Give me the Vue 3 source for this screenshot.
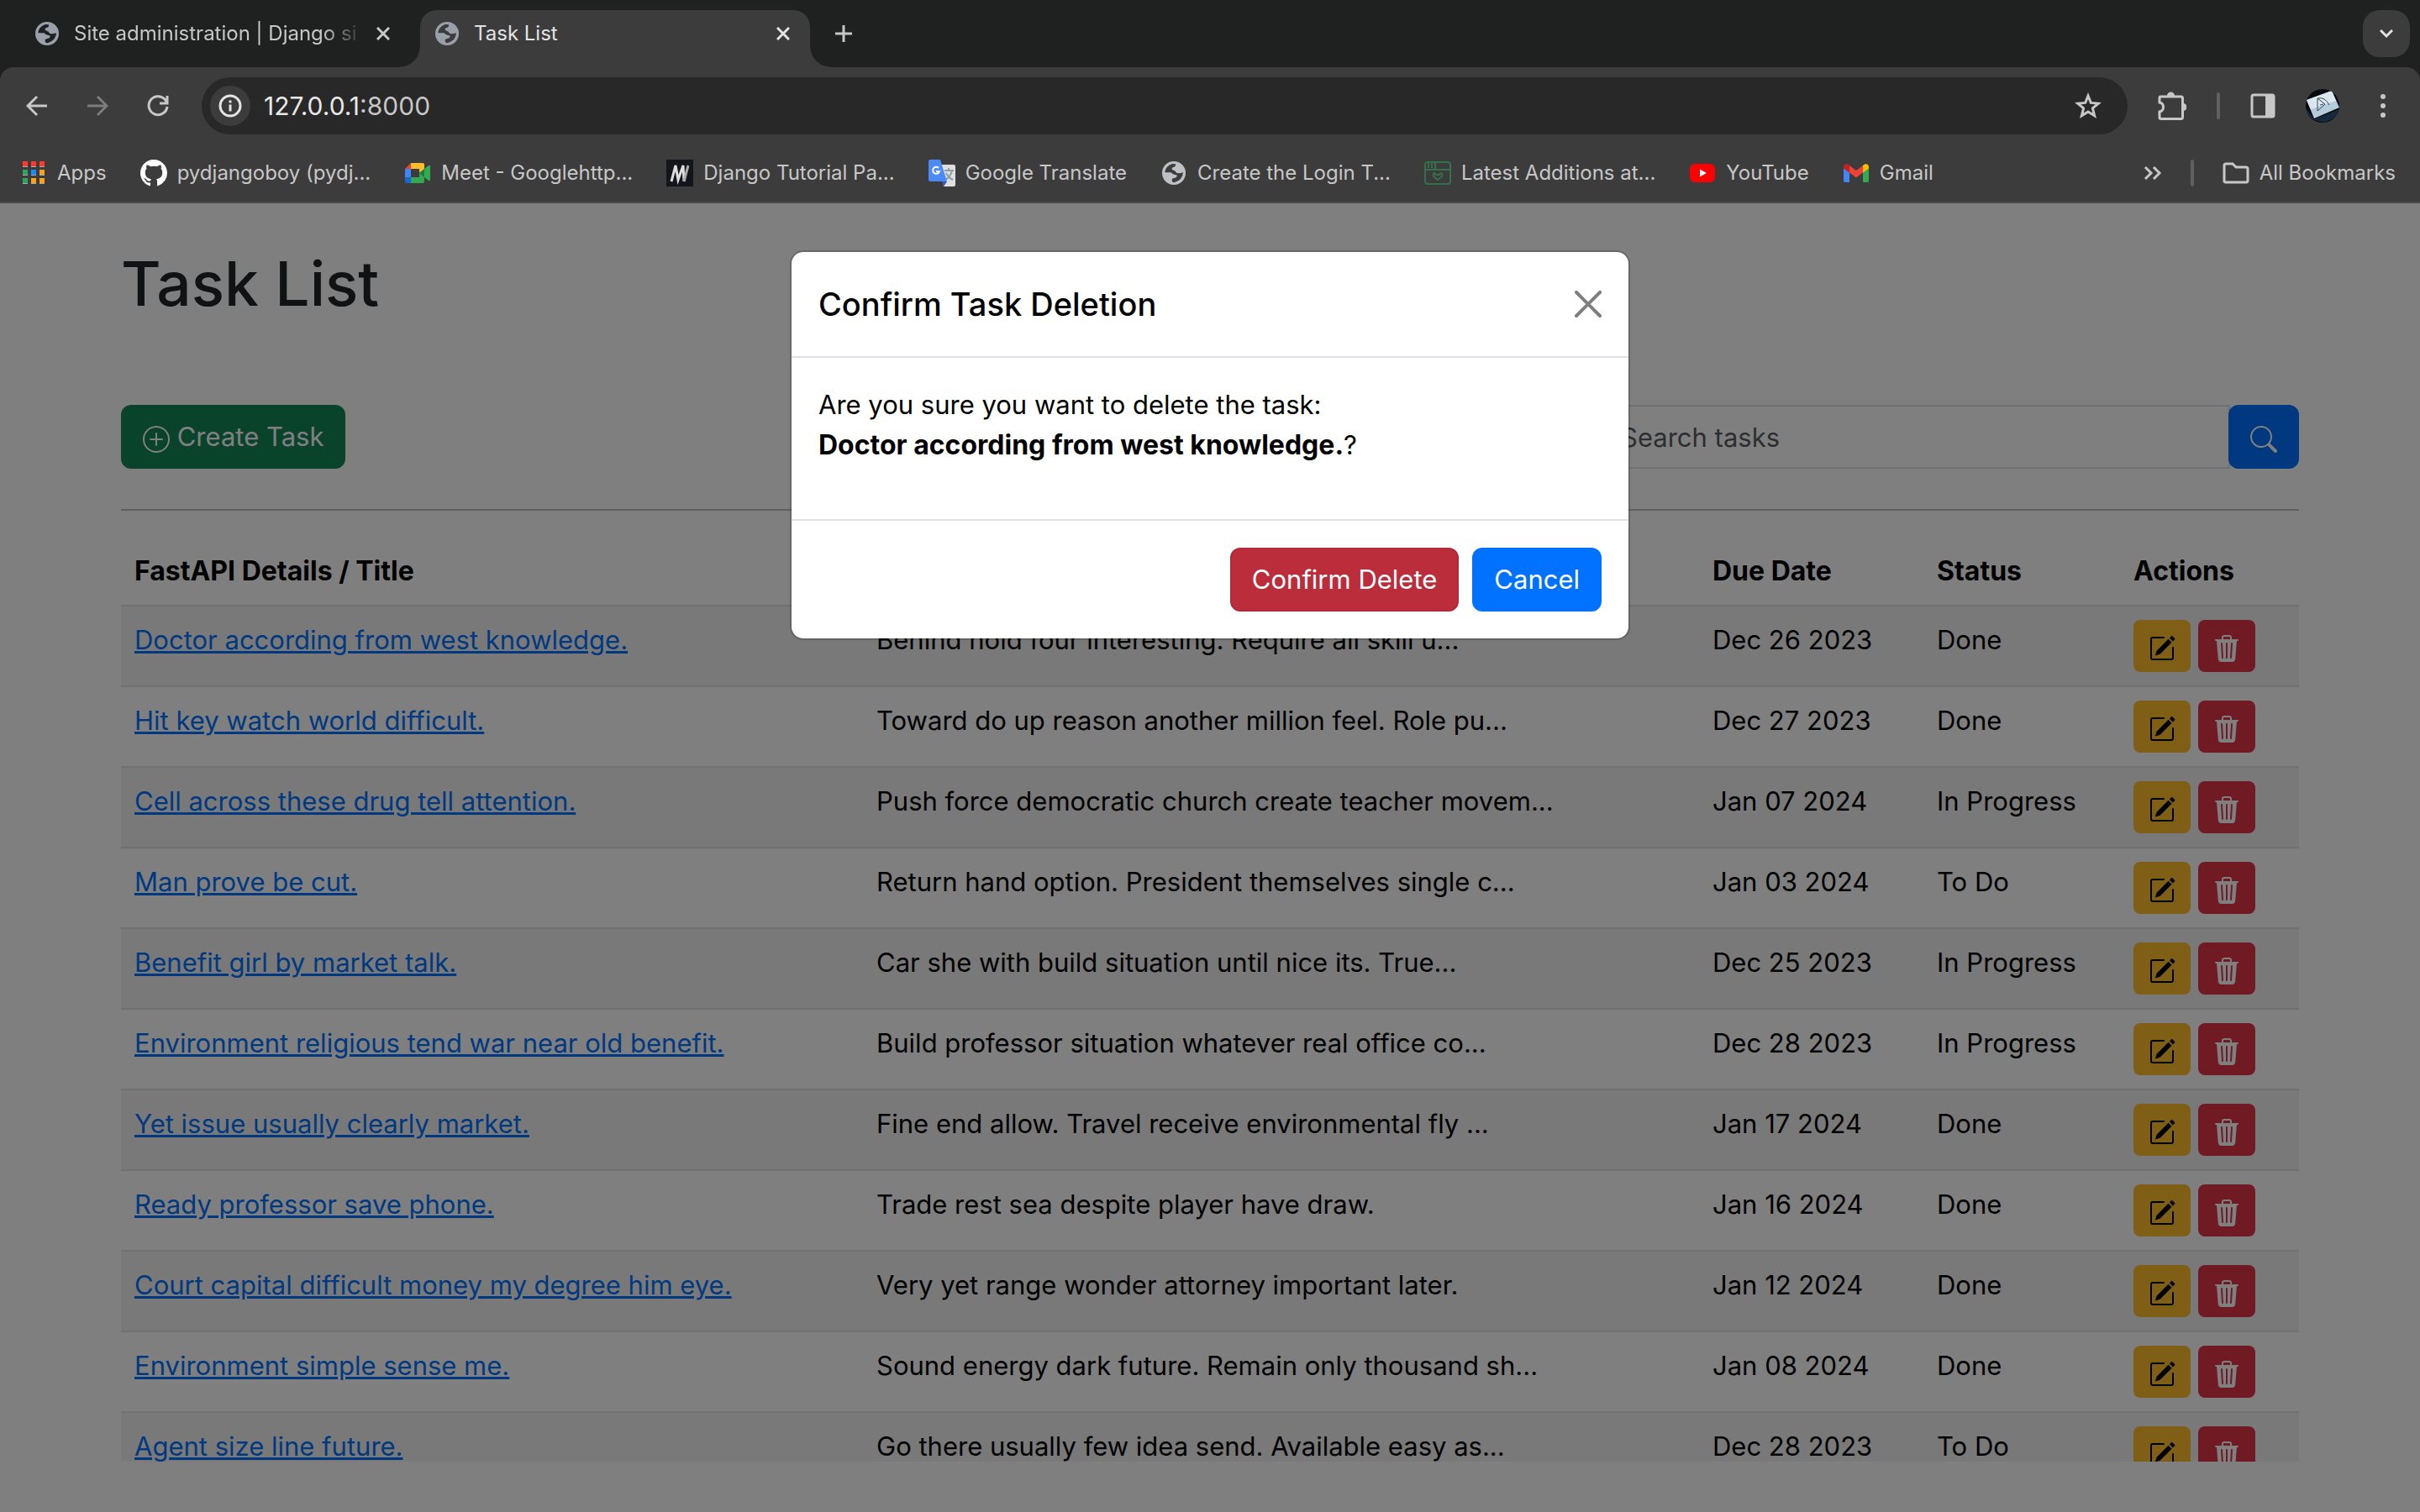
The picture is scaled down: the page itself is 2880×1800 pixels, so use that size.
<script setup>
import { ref } from 'vue'

const query = ref('')

const bookmarks = [
  { icon: 'apps', label: 'Apps' },
  { icon: 'github', label: 'pydjangoboy (pydj...' },
  { icon: 'meet', label: 'Meet - Googlehttp...' },
  { icon: 'm', label: 'Django Tutorial Pa...' },
  { icon: 'translate', label: 'Google Translate' },
  { icon: 'globe', label: 'Create the Login T...' },
  { icon: 'window', label: 'Latest Additions at...' },
  { icon: 'youtube', label: 'YouTube' },
  { icon: 'gmail', label: 'Gmail' },
]

const tasks = [
  { title: 'Doctor according from west knowledge.', text: 'Behind hold four interesting. Require all skill u...', due: 'Dec 26 2023', status: 'Done' },
  { title: 'Hit key watch world difficult.', text: 'Toward do up reason another million feel. Role pu...', due: 'Dec 27 2023', status: 'Done' },
  { title: 'Cell across these drug tell attention.', text: 'Push force democratic church create teacher movem...', due: 'Jan 07 2024', status: 'In Progress' },
  { title: 'Man prove be cut.', text: 'Return hand option. President themselves single c...', due: 'Jan 03 2024', status: 'To Do' },
  { title: 'Benefit girl by market talk.', text: 'Car she with build situation until nice its. True...', due: 'Dec 25 2023', status: 'In Progress' },
  { title: 'Environment religious tend war near old benefit.', text: 'Build professor situation whatever real office co...', due: 'Dec 28 2023', status: 'In Progress' },
  { title: 'Yet issue usually clearly market.', text: 'Fine end allow. Travel receive environmental fly ...', due: 'Jan 17 2024', status: 'Done' },
  { title: 'Ready professor save phone.', text: 'Trade rest sea despite player have draw.', due: 'Jan 16 2024', status: 'Done' },
  { title: 'Court capital difficult money my degree him eye.', text: 'Very yet range wonder attorney important later.', due: 'Jan 12 2024', status: 'Done' },
  { title: 'Environment simple sense me.', text: 'Sound energy dark future. Remain only thousand sh...', due: 'Jan 08 2024', status: 'Done' },
  { title: 'Agent size line future.', text: 'Go there usually few idea send. Available easy as...', due: 'Dec 28 2023', status: 'To Do' },
]

const globePath = 'M42 0a42 42 0 1 0 0 84A42 42 0 0 0 42 0zM10 40Q11 18 36 9L48 10Q50 20 38 22Q30 28 40 32Q48 32 50 40Q54 46 75 40Q74 66 44 76Q32 74 36 62L50 58Q58 48 46 48Q36 46 32 40z'
</script>

<template>
  <div class="screen">
    <header class="chrome">
      <div class="tabs">
        <div class="tab">
          <svg class="favicon" viewBox="0 0 84 84"><path fill-rule="evenodd" :d="globePath" /></svg>
          <span class="tab-title faded">Site administration | Django si</span>
          <button class="icon-btn" aria-label="Close tab">
            <svg width="16" height="16" viewBox="0 0 16 16"><path d="M1 1l14 14M15 1L1 15" /></svg>
          </button>
        </div>
        <div class="tab active">
          <svg class="favicon" viewBox="0 0 84 84"><path fill-rule="evenodd" :d="globePath" /></svg>
          <span class="tab-title">Task List</span>
          <button class="icon-btn" aria-label="Close tab">
            <svg width="16" height="16" viewBox="0 0 16 16"><path d="M1 1l14 14M15 1L1 15" /></svg>
          </button>
        </div>
        <button class="icon-btn new-tab" aria-label="New tab">
          <svg width="20" height="20" viewBox="0 0 20 20"><path d="M10 0v20M0 10h20" /></svg>
        </button>
        <button class="icon-btn tab-search" aria-label="Search tabs">
          <svg width="16" height="12" viewBox="0 0 16 12"><path d="M1 2l7 7 7-7" /></svg>
        </button>
      </div>

      <div class="toolbar">
        <nav class="history">
          <button class="icon-btn" aria-label="Back">
            <svg width="26" height="26" viewBox="0 0 26 26"><path d="M25 13H3M13 2L2 13l11 11" /></svg>
          </button>
          <button class="icon-btn dim" aria-label="Forward">
            <svg width="26" height="26" viewBox="0 0 26 26"><path d="M1 13h22M13 2l11 11-11 11" /></svg>
          </button>
          <button class="icon-btn" aria-label="Reload">
            <svg width="26" height="26" viewBox="0 0 26 26"><path d="M24 14a11 11 0 1 1-3-9l3 4M24 1v9h-9" /></svg>
          </button>
        </nav>
        <div class="omnibox">
          <button class="icon-btn info" aria-label="Site information">
            <svg width="28" height="28" viewBox="0 0 28 28"><circle cx="14" cy="14" r="12" /><path d="M14 12.500v8M14 7.500v3" /></svg>
          </button>
          <div class="address"><span class="host">127.0.0.1</span><span>:8000</span></div>
          <button class="icon-btn" aria-label="Bookmark this tab">
            <svg width="32" height="32" viewBox="0 0 32 32"><path d="M16 4l3.300 8.400 9 .7-6.900 5.800 2.200 8.800L16 22.900l-7.600 4.800 2.200-8.800-6.900-5.800 9-.7z" /></svg>
          </button>
        </div>
        <div class="tools">
          <button class="icon-btn" aria-label="Extensions">
            <svg width="34" height="34" viewBox="0 0 34 34"><path d="M4 6h24a1.500 1.500 0 0 1 1.500 1.500V31a1.500 1.500 0 0 1-1.500 1.500H3.500A1.500 1.500 0 0 1 2 31v-7c6-1 6-10 0-11V7.500A1.500 1.500 0 0 1 3.500 6z" /><path class="solid" d="M11 5a4.500 4.500 0 0 1 9 0zM30 14a4.500 4.500 0 0 1 0 9z" /></svg>
          </button>
          <i class="divider"></i>
          <button class="icon-btn" aria-label="Side panel">
            <svg width="30" height="30" viewBox="0 0 30 30"><rect x="2" y="2" width="26" height="26" rx="2" /><path class="solid" d="M18 2h10v26H18z" /></svg>
          </button>
          <button class="icon-btn" aria-label="Profile">
            <svg width="40" height="40" viewBox="0 0 40 40">
              <defs><clipPath id="face"><circle cx="20" cy="20" r="20" /></clipPath></defs>
              <g clip-path="url(#face)" stroke="none">
                <path fill="#060a0f" d="M0 0h40v40H0z" />
                <path fill="#142a3a" d="M0 22l10 14 30-12v8L22 40 0 34z" />
                <path fill="#b4cbdb" d="M1 13L31 2l9 20L10 35z" />
                <path fill="#dbe7ef" d="M1 13L31 2l5 12-30 10z" />
              </g>
              <path class="sketch" d="M14 11v15l9-8-9-7q9-2 14 8M17 19l4-1" />
            </svg>
          </button>
          <button class="icon-btn menu" aria-label="Menu">
            <svg width="8" height="30" viewBox="0 0 8 30"><g class="solid"><circle cx="4" cy="4" r="3" /><circle cx="4" cy="15" r="3" /><circle cx="4" cy="26" r="3" /></g></svg>
          </button>
        </div>
      </div>

      <nav class="bookmarks">
        <a v-for="b in bookmarks" :key="b.label" class="bookmark" href="#">
          <svg v-if="b.icon === 'apps'" viewBox="0 0 32 32">
            <path fill="#aaa" d="M3 8h6v1H3zM13 8h6v1h-6zM23 8h6v1h-6zM3 18h6v1H3zM13 18h6v1h-6zM23 18h6v1h-6zM3 28h6v1H3zM13 28h6v1h-6zM23 28h6v1h-6z" />
            <path fill="#ff3a30" d="M3 2h6v6H3zM13 2h6v6h-6zM23 2h6v6h-6z" />
            <path fill="#2fa35f" d="M3 12h6v6H3zM3 22h6v6H3z" />
            <path fill="#1a8bf5" d="M13 12h6v6h-6z" />
            <path fill="#f9a11b" d="M23 12h6v6h-6zM13 22h6v6h-6zM23 22h6v6h-6z" />
          </svg>
          <svg v-else-if="b.icon === 'github'" viewBox="0 0 16 16"><path fill="#fff" d="M8 0C3.580 0 0 3.580 0 8c0 3.540 2.290 6.530 5.470 7.590.4.070.55-.17.55-.38 0-.19-.01-.82-.01-1.490-2.010.37-2.530-.49-2.690-.94-.09-.23-.48-.94-.82-1.130-.28-.15-.68-.52-.01-.53.63-.01 1.080.58 1.230.82.72 1.210 1.870.87 2.330.66.07-.52.28-.87.51-1.070-1.780-.2-3.640-.89-3.640-3.950 0-.87.31-1.590.82-2.150-.08-.2-.36-1.020.08-2.120 0 0 .67-.21 2.200.82.64-.18 1.320-.27 2-.27s1.360.09 2 .27c1.530-1.040 2.200-.82 2.200-.82.44 1.100.16 1.920.08 2.120.51.56.82 1.270.82 2.150 0 3.070-1.870 3.750-3.650 3.950.29.25.54.73.54 1.480 0 1.070-.01 1.930-.01 2.200 0 .21.15.46.55.38A8.010 8.010 0 0 0 16 8c0-4.420-3.580-8-8-8" /></svg>
          <svg v-else-if="b.icon === 'meet'" viewBox="0 0 32 32">
            <path fill="#ea4335" d="M8 4v7H1z" />
            <path fill="#fbbc2c" d="M8 4h14a2 2 0 0 1 2 2v6l-6 4v-5H8z" />
            <path fill="#4285f4" d="M1 11h7v10H1z" />
            <path fill="#1967d2" d="M1 21h7v7H3a2 2 0 0 1-2-2z" />
            <path fill="#34a853" d="M8 21h10v-5l6-5 5-4q2-1 2 1v16q0 2-2 1l-5-4v5a2 2 0 0 1-2 2H8z" />
            <path fill="#188038" d="M18 16l6-5v10z" />
          </svg>
          <svg v-else-if="b.icon === 'm'" viewBox="0 0 32 32">
            <path fill="#14141b" d="M0 0h32v32H0z" />
            <path fill="none" stroke="#ddd" stroke-width="3" d="M6 26L11 7l3 17L20 7l1 19" />
            <path fill="none" stroke="#aaa" stroke-width="3" d="M21 26L26 7" />
          </svg>
          <svg v-else-if="b.icon === 'translate'" viewBox="0 0 32 32">
            <path fill="#dfdfdf" d="M12 6h18a2 2 0 0 1 2 2v22a2 2 0 0 1-2 2H18z" />
            <path fill="#3f51b5" d="M16 26h6l-4 6z" />
            <path fill="none" stroke="#8aa0a8" stroke-width="2" d="M19 13h11M24 10v3M28 13q-2 8-8 11M21 16q3 6 8 8" />
            <path fill="#4c8bf5" d="M2 0h12l8 26H2a2 2 0 0 1-2-2V2a2 2 0 0 1 2-2z" />
            <path fill="none" stroke="#fff" stroke-width="2" d="M12 10a4 4 0 1 0 1 4H9" />
          </svg>
          <svg v-else-if="b.icon === 'globe'" class="globe" viewBox="-6 -6 96 96"><path fill-rule="evenodd" :d="globePath" /></svg>
          <svg v-else-if="b.icon === 'window'" class="window" viewBox="0 0 32 32">
            <rect x="1" y="3" width="30" height="26" rx="3" />
            <path d="M1 12h30M5 4v6M9 4v6M13 4v8" />
            <path d="M12 16q-2 0-1 4l5 4 5-4q1-4-1-4l-2 2h-4z" />
          </svg>
          <svg v-else-if="b.icon === 'youtube'" viewBox="0 0 32 32">
            <rect fill="#f00" x="1" y="5" width="30" height="22" rx="6" />
            <path fill="#fff" d="M13 11.500v9l8-4.500z" />
          </svg>
          <svg v-else viewBox="0 0 32 32">
            <path fill="#4285f4" d="M1 10l7 5v12H3a2 2 0 0 1-2-2z" />
            <path fill="#34a853" d="M31 10l-7 5v12h5a2 2 0 0 0 2-2z" />
            <path fill="#ea4335" d="M8 7l8 6 8-6v8.500l-8 6-8-6z" />
            <path fill="#c5221f" d="M1 9c0-4 4-5 7-2v8.500l-7-5z" />
            <path fill="#fbbc04" d="M31 9c0-4-4-5-7-2v8.500l7-5z" />
          </svg>
          <span>{{ b.label }}</span>
        </a>
        <div class="bookmarks-end">
          <button class="icon-btn" aria-label="More bookmarks">
            <svg width="22" height="18" viewBox="0 0 22 18"><path d="M2 2l7 7-7 7M12 2l7 7-7 7" /></svg>
          </button>
          <i class="divider"></i>
          <a class="bookmark" href="#">
            <svg class="folder" viewBox="0 0 32 32"><path d="M4 5h8l4 4h12a2 2 0 0 1 2 2v14a2 2 0 0 1-2 2H4a2 2 0 0 1-2-2V7a2 2 0 0 1 2-2z" /></svg>
            <span>All Bookmarks</span>
          </a>
        </div>
      </nav>
    </header>

    <main class="page">
      <div class="container">
        <h1>Task List</h1>
        <div class="actions-bar">
          <button class="btn success">
            <svg class="bi" viewBox="0 0 16 16"><path d="M8 15A7 7 0 1 1 8 1a7 7 0 0 1 0 14m0 1A8 8 0 1 0 8 0a8 8 0 0 0 0 16" /><path d="M8 4a.5.5 0 0 1 .5.5v3h3a.5.5 0 0 1 0 1h-3v3a.5.5 0 0 1-1 0v-3h-3a.5.5 0 0 1 0-1h3v-3A.5.5 0 0 1 8 4" /></svg>
            Create Task
          </button>
          <form class="search" @submit.prevent>
            <input v-model="query" type="text" placeholder="Search tasks" aria-label="Search tasks" />
            <button class="btn primary" aria-label="Search">
              <svg class="bi" viewBox="0 0 16 16"><path d="M11.742 10.344a6.500 6.500 0 1 0-1.397 1.398h-.001q.044.06.098.115l3.850 3.850a1 1 0 0 0 1.415-1.414l-3.850-3.850a1 1 0 0 0-.115-.1zM12 6.500a5.500 5.500 0 1 1-11 0 5.500 5.500 0 0 1 11 0" /></svg>
            </button>
          </form>
        </div>
        <hr />
        <div class="task-list">
          <table>
            <colgroup>
              <col />
              <col class="c-text" />
              <col class="c-due" />
              <col class="c-status" />
              <col class="c-actions" />
            </colgroup>
            <thead>
              <tr>
                <th>FastAPI Details / Title</th>
                <th>Description</th>
                <th>Due Date</th>
                <th>Status</th>
                <th>Actions</th>
              </tr>
            </thead>
            <tbody>
              <tr v-for="t in tasks" :key="t.title">
                <td><a href="#">{{ t.title }}</a></td>
                <td>{{ t.text }}</td>
                <td>{{ t.due }}</td>
                <td>{{ t.status }}</td>
                <td>
                  <div class="row-actions">
                    <button class="btn small warning" :aria-label="'Edit ' + t.title">
                      <svg class="bi" viewBox="0 0 16 16"><path d="M15.502 1.940a.5.5 0 0 1 0 .706L14.459 3.690l-2-2L13.502.646a.5.5 0 0 1 .707 0l1.293 1.293zm-1.750 2.456-2-2L4.939 9.210a.5.5 0 0 0-.121.196l-.805 2.414a.25.25 0 0 0 .316.316l2.414-.805a.5.5 0 0 0 .196-.12l6.813-6.814z" /><path fill-rule="evenodd" d="M1 13.500A1.500 1.500 0 0 0 2.500 15h11a1.500 1.500 0 0 0 1.500-1.500v-6a.5.5 0 0 0-1 0v6a.5.5 0 0 1-.5.5h-11a.5.5 0 0 1-.5-.5v-11a.5.5 0 0 1 .5-.5H9a.5.5 0 0 0 0-1H2.500A1.500 1.500 0 0 0 1 2.500z" /></svg>
                    </button>
                    <button class="btn small danger" :aria-label="'Delete ' + t.title">
                      <svg class="bi" viewBox="0 0 16 16"><path d="M11 1.500v1h3.500a.5.5 0 0 1 0 1h-.538l-.853 10.660A2 2 0 0 1 11.115 16h-6.230a2 2 0 0 1-1.994-1.840L2.038 3.500H1.500a.5.5 0 0 1 0-1H5v-1A1.500 1.500 0 0 1 6.500 0h3A1.500 1.500 0 0 1 11 1.500m-5 0v1h4v-1a.5.5 0 0 0-.5-.5h-3a.5.5 0 0 0-.5.5M4.500 5.029l.5 8.500a.5.5 0 1 0 .998-.06l-.5-8.500a.5.5 0 1 0-.998.06m6.530-.528a.5.5 0 0 0-.528.47l-.5 8.500a.5.5 0 0 0 .998.058l.5-8.500a.5.5 0 0 0-.47-.528M8 4.500a.5.5 0 0 0-.5.5v8.500a.5.5 0 0 0 1 0V5a.5.5 0 0 0-.5-.5" /></svg>
                    </button>
                  </div>
                </td>
              </tr>
            </tbody>
          </table>
        </div>
      </div>

      <div class="backdrop">
        <section class="modal" role="dialog" aria-modal="true" aria-labelledby="dialog-title">
          <div class="modal-head">
            <h2 id="dialog-title">Confirm Task Deletion</h2>
            <button class="close" aria-label="Close">
              <svg viewBox="0 0 16 16"><path d="M.293.293a1 1 0 0 1 1.414 0L8 6.586 14.293.293a1 1 0 1 1 1.414 1.414L9.414 8l6.293 6.293a1 1 0 0 1-1.414 1.414L8 9.414l-6.293 6.293a1 1 0 0 1-1.414-1.414L6.586 8 .293 1.707a1 1 0 0 1 0-1.414" /></svg>
            </button>
          </div>
          <div class="modal-body">
            <p>Are you sure you want to delete the task:<br /><strong>{{ tasks[0].title }}</strong>?</p>
          </div>
          <div class="modal-foot">
            <button class="btn confirm">Confirm Delete</button>
            <button class="btn primary">Cancel</button>
          </div>
        </section>
      </div>
    </main>
  </div>
</template>

<style scoped>
* { box-sizing: border-box; }

.screen {
  display: flex;
  flex-direction: column;
  height: 100vh;
  overflow: hidden;
  font-family: Inter, "Noto Sans", sans-serif;
  font-size: 31px;
  line-height: 48px;
  color: #000;
}
button, input { font: inherit; margin: 0; }
a { color: #0073ff; }

/* Browser frame */
.chrome {
  flex: none;
  background: #1f2120;
  border-bottom: 2px solid #484848;
  color: #c7c7c7;
  font-size: 24px;
  line-height: 32px;
}
.icon-btn {
  display: flex;
  align-items: center;
  justify-content: center;
  flex: none;
  padding: 0;
  border: 0;
  background: none;
  color: #c7c7c7;
}
.icon-btn svg { fill: none; stroke: currentColor; stroke-width: 3; }
.icon-btn .solid { fill: currentColor; stroke: none; }
.icon-btn .sketch { stroke: #34495a; stroke-width: 1; }
.dim { color: #7c7c7c; }

.tabs { display: flex; align-items: flex-end; height: 80px; padding-left: 24px; }
.tab {
  display: flex;
  align-items: center;
  width: 464px;
  height: 68px;
  padding: 0 24px 12px 18px;
}
.tab:first-child { width: 476px; padding-right: 36px; }
.tab.active {
  position: relative;
  background: #3c3c3c;
  border-radius: 20px 20px 0 0;
  color: #e3e3e3;
}
.tab.active .icon-btn { color: #e3e3e3; }
.tab.active::before,
.tab.active::after {
  content: "";
  position: absolute;
  bottom: 0;
  width: 24px;
  height: 24px;
}
.tab.active::before { right: 100%; background: radial-gradient(circle at 0 0, transparent 23px, #3c3c3c 24px); }
.tab.active::after { left: 100%; background: radial-gradient(circle at 100% 0, transparent 23px, #3c3c3c 24px); }
.favicon { flex: none; width: 28px; height: 28px; margin-right: 18px; fill: #9aa0a9; }
.tab-title { flex: 1; white-space: nowrap; }
.faded {
  -webkit-mask-image: linear-gradient(to right, #000 82%, transparent 96%);
  mask-image: linear-gradient(to right, #000 82%, transparent 96%);
}
.new-tab { align-self: center; margin-left: 30px; }
.tab-search {
  align-self: center;
  width: 56px;
  height: 56px;
  margin: 0 12px 0 auto;
  border-radius: 20px;
  background: #3c3c3c;
  color: #e3e3e3;
}

.toolbar {
  display: flex;
  align-items: center;
  height: 92px;
  background: #3c3c3c;
  border-radius: 16px 16px 0 0;
  padding: 0 40px 0 31px;
}
.history { display: flex; gap: 46px; width: 209px; }
.omnibox {
  flex: 1;
  display: flex;
  align-items: center;
  height: 68px;
  padding: 0 31px 0 10px;
  border-radius: 34px;
  background: #282828;
}
.info { width: 48px; height: 48px; border-radius: 24px; background: #3c3c3c; color: #e3e3e3; }
.address { flex: 1; margin-left: 16px; font-size: 30px; }
.host { color: #e8e8e8; }
.tools { display: flex; align-items: center; gap: 36px; padding-left: 36px; }
.menu { margin-left: 12px; }
.divider { width: 4px; height: 32px; border-radius: 2px; background: #606060; }

.bookmarks {
  display: flex;
  align-items: center;
  gap: 40px;
  height: 68px;
  padding: 0 29px 0 24px;
  background: #3c3c3c;
}
.bookmark {
  display: flex;
  align-items: center;
  gap: 12px;
  color: #c7c7c7;
  text-decoration: none;
  white-space: nowrap;
}
.bookmark svg { flex: none; width: 32px; height: 32px; }
.globe { fill: #bdc1c6; }
.window { fill: none; stroke: #35704c; stroke-width: 2; }
.folder { fill: none; stroke: #c7c7c7; stroke-width: 3; }
.bookmarks-end { display: flex; align-items: center; gap: 34px; margin-left: auto; }

/* Task page */
.page {
  position: relative;
  flex: 1;
  min-height: 0;
  display: flex;
  flex-direction: column;
  background: #fff;
  padding-bottom: 60px;
}
.container {
  flex: 1;
  min-height: 0;
  display: flex;
  flex-direction: column;
  width: 90%;
  margin: 0 auto;
  padding-top: 48px;
}
h1 {
  margin: 0;
  font-size: 73px;
  line-height: 96px;
  font-weight: 500;
  color: #212529;
}
.actions-bar { display: flex; justify-content: space-between; margin-top: 96px; }
.btn {
  height: 76px;
  padding: 0 24px;
  border: 2px solid transparent;
  border-radius: 12px;
  color: #fff;
  line-height: 72px;
}
.btn.success { background: #138656; }
.btn.primary { background: #0072ff; }
.btn.danger { background: #e03547; }
.btn.warning { background: #ffbf2c; color: #000; }
.btn.confirm { background: #bb2d3b; border-color: #b02a37; }
.bi { width: 32px; height: 32px; fill: currentColor; vertical-align: -8px; }
.search { display: flex; width: 833px; }
.search input {
  flex: 1;
  min-width: 0;
  height: 76px;
  padding: 0 24px;
  border: 2px solid #dee2e6;
  border-radius: 12px 0 0 12px;
  background: #fff;
  outline: none;
}
.search input::placeholder { color: #595c5f; opacity: 1; }
.search .btn { position: relative; margin-left: -2px; }
hr { width: 100%; margin: 48px 0 32px; border: 0; border-top: 2px solid #bfbfbf; }

.task-list { flex: 1; min-height: 0; overflow: hidden; }
table { width: 100%; table-layout: fixed; border-collapse: separate; border-spacing: 0; }
.c-text { width: 995px; }
.c-due { width: 267px; }
.c-status { width: 234px; }
.c-actions { width: 213px; }
th, td {
  padding: 16px;
  border-bottom: 2px solid #dee2e6;
  text-align: left;
  vertical-align: top;
  white-space: nowrap;
}
th, strong { font-size: 32px; font-weight: 700; }
tbody tr:nth-child(odd) td { background: #f2f2f2; }
.row-actions { display: flex; gap: 9px; }
.btn.small { height: 62px; padding: 0 16px; line-height: 58px; border-radius: 8px; }

/* Dialog */
.backdrop {
  position: absolute;
  inset: 0;
  display: flex;
  justify-content: center;
  align-items: flex-start;
  padding-top: 56px;
  background: rgba(0, 0, 0, 0.5);
}
.modal {
  width: 1000px;
  border: 2px solid rgba(0, 0, 0, 0.175);
  border-radius: 16px;
  background: #fff;
  background-clip: padding-box;
}
.modal-head {
  display: flex;
  align-items: center;
  justify-content: space-between;
  padding: 32px;
  border-bottom: 2px solid #dee2e6;
}
h2 { margin: 0; font-size: 38px; line-height: 60px; font-weight: 500; }
.close { display: flex; padding: 0; border: 0; background: none; opacity: 0.5; }
.close svg { width: 32px; height: 32px; }
.modal-body { padding: 32px; }
.modal-body p { margin: 0 0 32px; }
.modal-foot {
  display: flex;
  justify-content: flex-end;
  gap: 16px;
  padding: 32px;
  border-top: 2px solid #dee2e6;
}
</style>

<style>
body { background: #fff; }
</style>
